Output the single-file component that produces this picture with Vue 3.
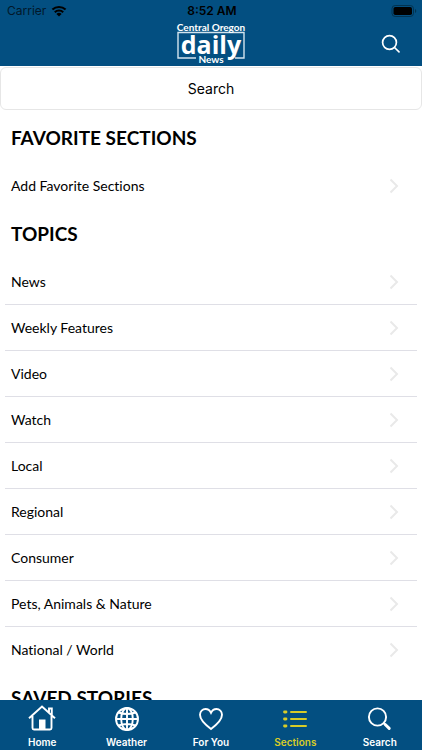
<script setup>
const favorites = ['Add Favorite Sections']
const topics = [
  'News',
  'Weekly Features',
  'Video',
  'Watch',
  'Local',
  'Regional',
  'Consumer',
  'Pets, Animals & Nature',
  'National / World',
]
const tabs = [
  { id: 'home', label: 'Home' },
  { id: 'weather', label: 'Weather' },
  { id: 'foryou', label: 'For You' },
  { id: 'sections', label: 'Sections' },
  { id: 'search', label: 'Search' },
]
const activeTab = 'sections'
</script>

<template>
  <div class="screen">
    <header class="top">
      <div class="status">
        <div class="carrier">
          <span>Carrier</span>
          <svg class="wifi" viewBox="0 0 16 12" aria-hidden="true">
            <path d="M1.4 4.6a9.6 9.6 0 0 1 13.2 0M3.8 7.2a6 6 0 0 1 8.4 0" fill="none" stroke="#000" stroke-width="2.1" />
            <path d="M8 11.6 5.4 9a3.7 3.7 0 0 1 5.2 0z" />
          </svg>
        </div>
        <time class="clock">8:52 AM</time>
        <svg class="battery" viewBox="0 0 26 12" aria-hidden="true">
          <rect x="1" y="0.5" width="21.5" height="11" rx="3.2" fill="none" stroke="#023350" />
          <rect x="2.5" y="2" width="18.5" height="8" rx="1.8" />
          <path d="M24 4v4a2.2 2.2 0 0 0 0-4z" fill="#023350" />
        </svg>
      </div>
      <div class="brand-bar">
        <a class="brand" href="#" aria-label="Central Oregon Daily News">
          <svg viewBox="0 0 70 42" aria-hidden="true">
            <path d="M20 35H2V9.500h66V35h-9" fill="none" stroke="#d3e4ee" stroke-width="1.400" />
            <text class="logo-small" x="35" y="8" text-anchor="middle">Central Oregon</text>
            <text class="logo-main" x="35" y="31" text-anchor="middle">daily</text>
            <text class="logo-small" x="35" y="40" text-anchor="middle">News</text>
          </svg>
        </a>
        <button class="find" type="button" aria-label="Search">
          <svg viewBox="0 0 20 20" aria-hidden="true">
            <circle cx="8.500" cy="8.500" r="6.900" />
            <path d="m13.500 13.500 4.500 4.300" />
          </svg>
        </button>
      </div>
    </header>

    <main class="content">
      <input class="query" type="text" placeholder="Search" aria-label="Search sections" />

      <section>
        <h2>Favorite Sections</h2>
        <ul>
          <li v-for="item in favorites" :key="item">
            <a href="#">
              <span>{{ item }}</span>
              <svg class="chevron" viewBox="0 0 10 16" aria-hidden="true"><path d="M1.500 1.500 8 8l-6.500 6.500" /></svg>
            </a>
          </li>
        </ul>
      </section>

      <section>
        <h2>Topics</h2>
        <ul>
          <li v-for="item in topics" :key="item">
            <a href="#">
              <span>{{ item }}</span>
              <svg class="chevron" viewBox="0 0 10 16" aria-hidden="true"><path d="M1.500 1.500 8 8l-6.500 6.500" /></svg>
            </a>
          </li>
        </ul>
      </section>

      <section>
        <h2>Saved Stories</h2>
      </section>
    </main>

    <nav class="tabs" aria-label="Main">
      <a v-for="tab in tabs" :key="tab.id" href="#" :class="{ active: tab.id === activeTab }">
        <svg viewBox="0 0 28 28" aria-hidden="true">
          <template v-if="tab.id === 'home'">
            <path d="M1 13.300 14 1.500l13 11.800M4.500 11V23q0 1.500 1.500 1.500h16q1.500 0 1.500-1.500V11M21 7V3.500h2.800V10" />
            <path d="M11 14.500h6.500v10H11z" fill="currentColor" stroke="none" />
          </template>
          <template v-else-if="tab.id === 'weather'">
            <circle cx="14" cy="14" r="11" />
            <ellipse cx="14" cy="14" rx="5.800" ry="11" />
            <path d="M14 3v22M3 14h22M5.500 7.500q8.500 3 17 0M5.500 20.500q8.500-3 17 0" />
          </template>
          <path
            v-else-if="tab.id === 'foryou'"
            d="M14 24C10 21 3 15.300 3 9.800 3 6.300 5.600 4 8.500 4c2.500 0 4.400 1.500 5.500 3.800C15.100 5.500 17 4 19.500 4c2.900 0 5.500 2.300 5.500 5.800 0 5.500-7 11.200-11 14.200z"
          />
          <template v-else-if="tab.id === 'sections'">
            <path d="M10 7h15M10 14h15M10 21h15" stroke-width="2" stroke-linecap="round" />
            <path d="M3.500 7H5M3.500 14H5M3.500 21H5" stroke-width="2.800" stroke-linecap="round" />
          </template>
          <template v-else>
            <circle cx="11.500" cy="12" r="8.600" />
            <path d="m17.700 18.200 1.500 1.500" />
            <path d="m19.200 19.500 4 3.900" stroke-width="3" stroke-linecap="round" />
          </template>
        </svg>
        <span>{{ tab.label }}</span>
      </a>
    </nav>
  </div>
</template>

<style>
body {
  margin: 0;
  background: #fff;
}
</style>

<style scoped>
.screen {
  display: flex;
  flex-direction: column;
  height: 100vh;
  overflow: hidden;
  color: #000;
  background: #fff;
  font-family: Lato, "Open Sans", sans-serif;
  font-variant-ligatures: none;
}

.top {
  flex: none;
  background: #034f81;
}

.status {
  display: grid;
  grid-template-columns: 1fr auto 1fr;
  align-items: center;
  height: 22px;
  padding: 0 5px 0 7px;
  font: 12px/22px Inter, sans-serif;
}

.carrier {
  display: flex;
  align-items: center;
  gap: 5px;
  color: #02182a;
}

.wifi {
  width: 16px;
  height: 12px;
}

.clock {
  font-weight: 600;
}

.battery {
  justify-self: end;
  width: 26px;
  height: 12px;
}

.brand-bar {
  display: grid;
  grid-template-columns: 1fr auto 1fr;
  align-items: center;
  height: 44px;
}

.brand {
  grid-column: 2;
  display: block;
  width: 70px;
  height: 42px;
}

.brand svg {
  display: block;
  width: 100%;
  height: 100%;
  overflow: visible;
  fill: #fff;
}

.logo-small {
  font: bold 10px Lato, sans-serif;
}

.logo-main {
  font: bold 25px "Open Sans", sans-serif;
}

.find {
  justify-self: end;
  display: flex;
  margin: 0 21px 0 0;
  padding: 0;
  border: 0;
  background: none;
}

.find svg {
  width: 20px;
  height: 20px;
  fill: none;
  stroke: #fff;
  stroke-width: 1.7;
  stroke-linecap: round;
}

.content {
  flex: 1;
  min-height: 0;
  overflow: hidden;
}

.query {
  display: block;
  box-sizing: border-box;
  width: 100%;
  height: 43px;
  margin: 1px 0 3px;
  border: 1px solid #e6e6e6;
  border-radius: 6px;
  background: #fff;
  text-align: center;
  font: 14px Inter, sans-serif;
}

.query::placeholder {
  color: #000;
  opacity: 1;
}

h2 {
  margin: 0;
  padding: 0 11px;
  font-size: 19px;
  font-weight: 700;
  line-height: 50px;
  text-transform: uppercase;
}

ul {
  margin: 0;
  padding: 0 5px;
  list-style: none;
}

li {
  box-sizing: border-box;
  height: 46px;
  border-bottom: 1px solid #dfdfe6;
}

li:last-child {
  border-bottom-color: transparent;
}

li a {
  display: flex;
  align-items: center;
  justify-content: space-between;
  height: 100%;
  padding: 0 18px 0 6px;
  color: inherit;
  font-size: 14px;
  text-decoration: none;
}

.chevron {
  width: 10px;
  height: 16px;
  fill: none;
  stroke: #e9e9e9;
  stroke-width: 2;
}

.tabs {
  flex: none;
  display: grid;
  grid-template-columns: repeat(5, 1fr);
  height: 50px;
  background: #034f81;
}

.tabs a {
  display: flex;
  flex-direction: column;
  align-items: center;
  padding-top: 5px;
  color: #fff;
  font: 600 10px/18px Inter, sans-serif;
  text-decoration: none;
}

.tabs a.active {
  color: #d8cc28;
}

.tabs svg {
  width: 28px;
  height: 28px;
  fill: none;
  stroke: currentColor;
  stroke-width: 1.9;
}
</style>
